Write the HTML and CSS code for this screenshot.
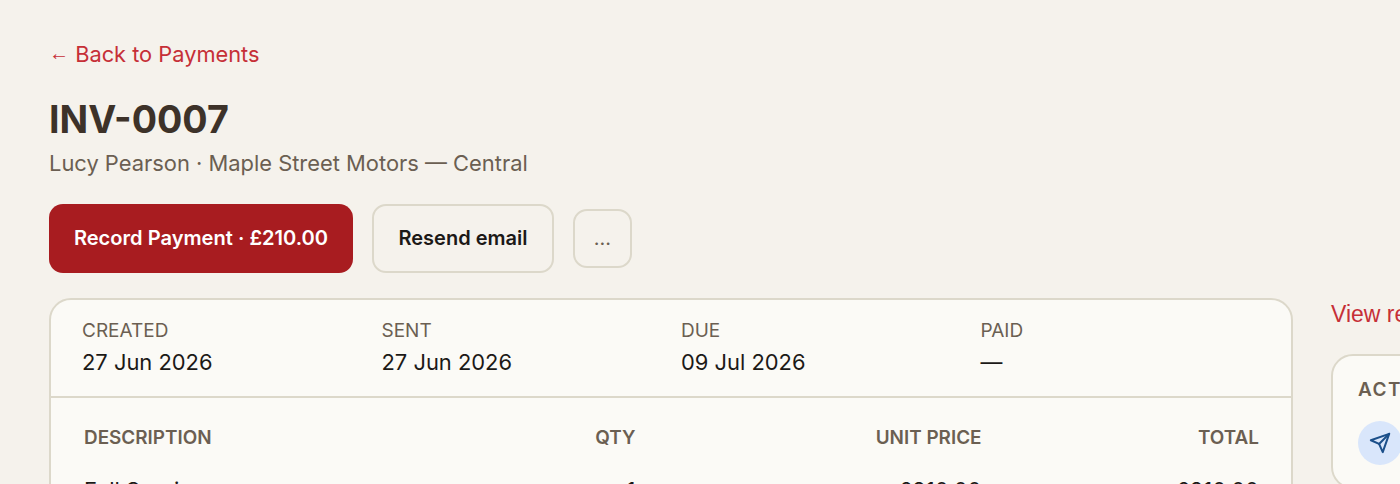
FILE: index.html
```html
<!DOCTYPE html>
<html lang="en">
<head>
<meta charset="utf-8">
<title>INV-0007</title>
<link rel="stylesheet" href="styles.css">
</head>
<body>
<div class="page">
  <a class="back" href="#"><span class="arrow">←</span> Back to Payments</a>
  <h1 class="title">INV-0007</h1>
  <p class="sub">Lucy Pearson · Maple Street Motors — Central</p>
  <div class="actions">
    <button class="btn primary">Record Payment · £210.00</button>
    <button class="btn secondary">Resend email</button>
    <button class="btn more">...</button>
  </div>
  <div class="columns">
    <section class="card main">
      <div class="dates">
        <div><div class="label">CREATED</div><div class="value">27 Jun 2026</div></div>
        <div><div class="label">SENT</div><div class="value">27 Jun 2026</div></div>
        <div><div class="label">DUE</div><div class="value">09 Jul 2026</div></div>
        <div><div class="label">PAID</div><div class="value">—</div></div>
      </div>
      <table class="items">
        <thead>
          <tr><th class="desc">DESCRIPTION</th><th class="num qty">QTY</th><th class="num unit">UNIT PRICE</th><th class="num total">TOTAL</th></tr>
        </thead>
        <tbody>
          <tr><td class="desc">Full Service</td><td class="num qty">1</td><td class="num unit">£210.00</td><td class="num total">£210.00</td></tr>
        </tbody>
      </table>
    </section>
    <aside class="side">
      <a class="receipt" href="#">View receipt</a>
      <section class="card activity">
        <h2 class="act-title">ACTIVITY</h2>
        <div class="act-row">
          <span class="act-icon">
            <svg viewBox="0 0 24 24" width="22" height="22" fill="none" stroke="currentColor" stroke-width="2.2" stroke-linecap="round" stroke-linejoin="round"><path d="M22 2 15 22l-4-9-9-4Z"/><path d="M22 2 11 13"/></svg>
          </span>
          <span class="act-text">Invoice sent</span>
        </div>
      </section>
    </aside>
  </div>
</div>
</body>
</html>
```

FILE: styles.css
```css
* { box-sizing: border-box; }
html, body { margin: 0; height: 100%; overflow: hidden; }
body { background: #f5f2ec; font-family: Inter, "Liberation Sans", sans-serif; color: #1c1917; }
.page { width: 1700px; padding: 42px 0 0 49px; }
.back { display: block; color: #c62f37; font-size: 21.8px; line-height: 24px; text-decoration: none; }
.arrow { font-family: "Liberation Sans", sans-serif; font-size: 20px; line-height: 1; vertical-align: 2px; }
.title { margin: 32px 0 0; font-size: 37.6px; line-height: 44px; font-weight: 700; color: #3d3229; }
.sub { margin: 7px 0 0; font-size: 21.9px; line-height: 28px; color: #6b5f52; }
.actions { display: flex; align-items: center; gap: 19px; margin-top: 27px; }
.btn { font-family: inherit; border-radius: 14px; cursor: pointer; padding: 0 0 2px; }
.primary { width: 304px; height: 69px; border: 0; background: #a81c20; color: #fff; font-size: 20.1px; font-weight: 600; }
.secondary { width: 182px; height: 69px; border: 2px solid #dcd8ca; background: #f5f2ec; color: #1c1917; font-size: 20px; font-weight: 600; }
.more { width: 59px; height: 59px; border: 2px solid #dcd8ca; background: #f5f2ec; color: #6b5f52; font-size: 20px; }
.columns { display: grid; grid-template-columns: 1244px 360px; gap: 38px; margin-top: 25px; align-items: start; }
.card { background: #fbfaf6; border: 2px solid #dcd8ca; border-radius: 22px; }
.dates { display: grid; grid-template-columns: repeat(4, 299.5px); padding: 19px 31px 17px; border-bottom: 2px solid #dcd8ca; height: 98px; }
.label { font-size: 19px; line-height: 24px; color: #6b5f52; }
.value { margin-top: 4px; font-size: 21.9px; line-height: 30px; color: #1c1917; }
.items { width: 100%; table-layout: fixed; border-collapse: collapse; margin-top: 26px; }
.items th { font-size: 18.9px; line-height: 28px; font-weight: 600; color: #6b5f52; padding: 0; }
.items td { font-size: 22px; line-height: 28px; padding: 24px 0 14px; }
.desc { text-align: left; }
.num { text-align: right; }
.items .desc { width: 490px; padding-left: 33px; }
.items .qty { width: 94.5px; }
.items .unit { width: 346px; }
.items .total { padding-right: 32px; }
.receipt { display: block; color: #c62f37; font-size: 23px; line-height: 30px; margin-top: 1px; text-decoration: none; font-family: "Liberation Sans", sans-serif; }
.activity { margin-top: 25px; padding: 22px 25px; }
.act-title { margin: 0; font-size: 19px; line-height: 24px; font-weight: 600; letter-spacing: 1.5px; color: #6b5f52; }
.act-row { display: flex; align-items: center; gap: 14px; margin-top: 19px; }
.act-icon { width: 44px; height: 44px; flex: none; border-radius: 50%; background: #d9e6fb; color: #1b4f8a; display: flex; align-items: center; justify-content: center; }
.act-text { font-size: 20px; }
```
